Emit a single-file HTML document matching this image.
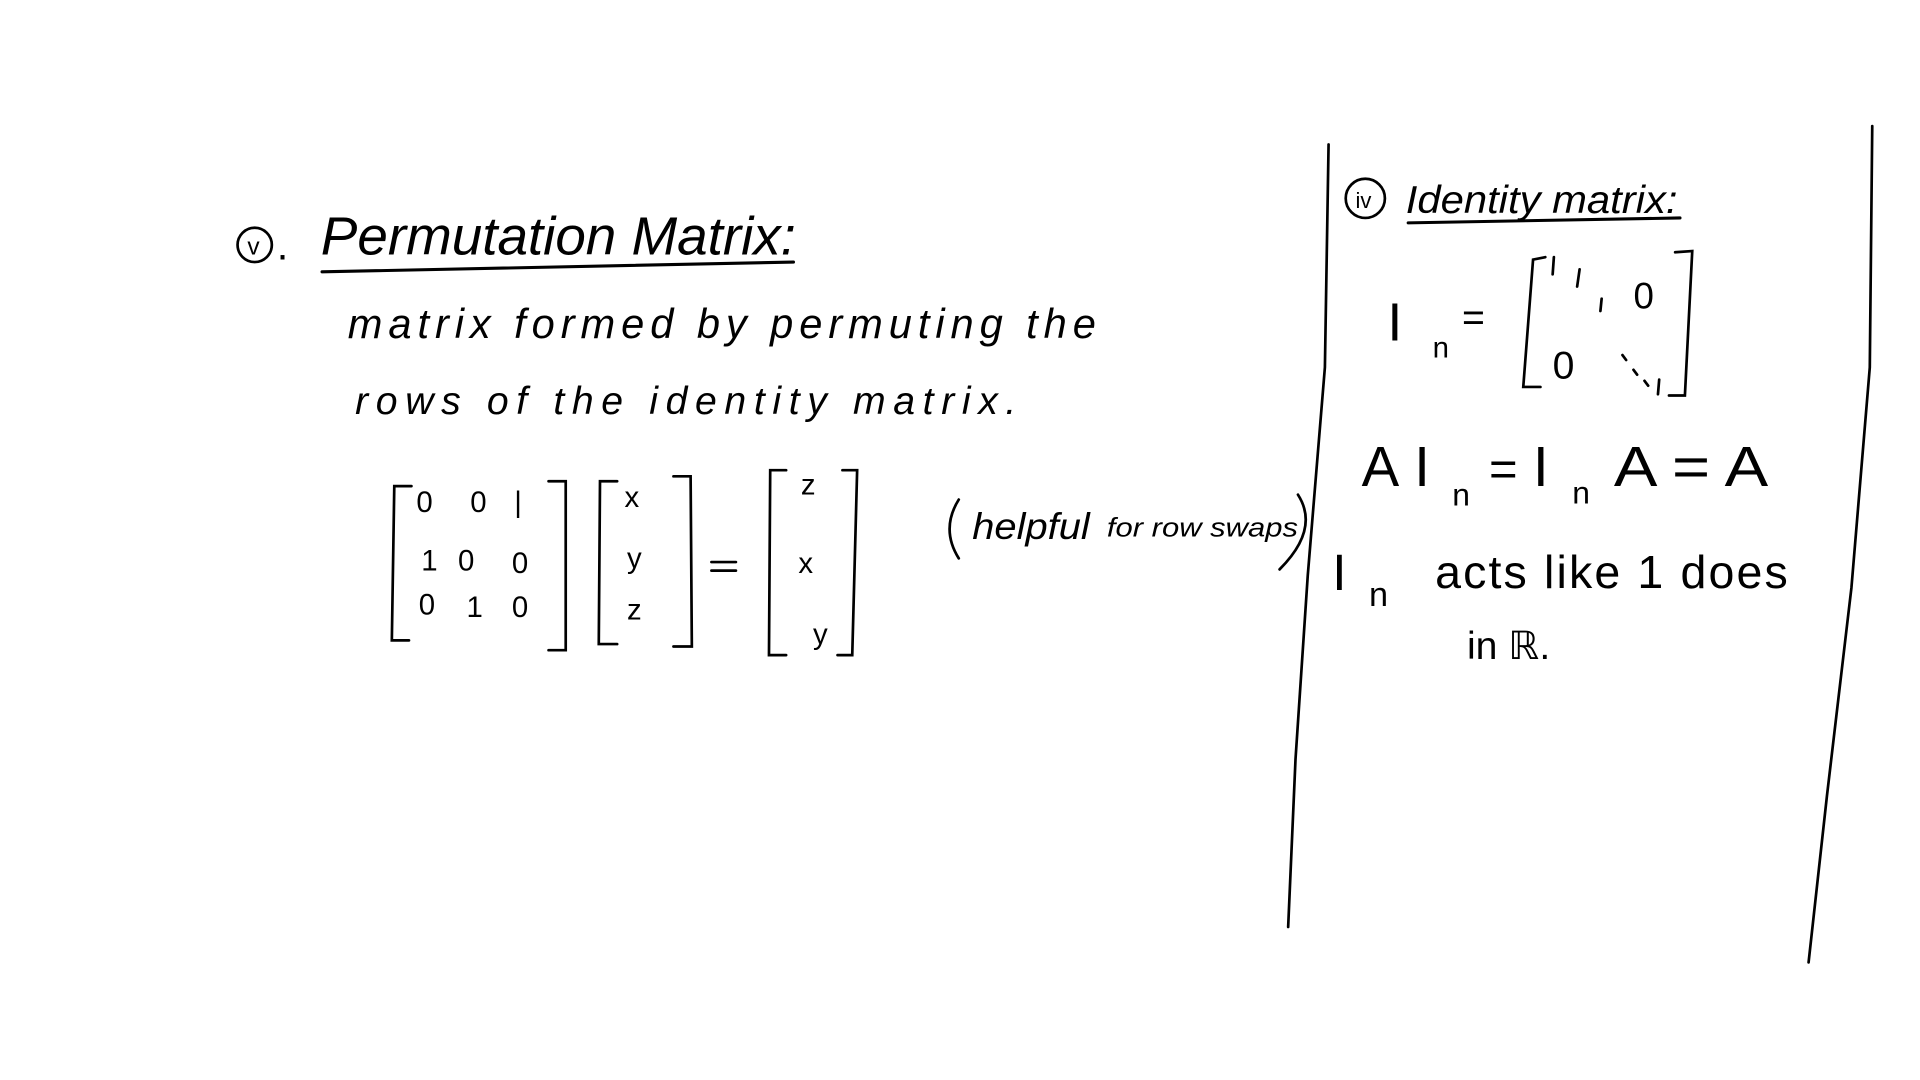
<!DOCTYPE html>
<html><head><meta charset="utf-8"><style>
html,body{margin:0;padding:0;background:#fff;width:1920px;height:1080px;overflow:hidden}
svg{display:block}
text{font-family:"Liberation Sans",sans-serif;fill:#000}
</style></head><body>
<svg width="1920" height="1080" viewBox="0 0 1568 882" preserveAspectRatio="none">
<g stroke="#000" fill="none" stroke-linecap="round" stroke-width="2.2">
<path d="M1085 118 L1082 300 L1068 470 L1058 620 L1052 757"/>
<path d="M1529 103 L1527 300 L1512 480 L1492 650 L1477 786"/>
<path d="M263 222 L648 214" stroke-width="2.5"/>
<path d="M1150 182 L1372 178" stroke-width="2.5"/>
<circle cx="208" cy="200" r="14"/>
<circle cx="1115" cy="162" r="16"/>
<path d="M336 397 L322 397 L320 523 L334 523"/>
<path d="M448 393 L462 393 L462 531 L448 531"/>
<path d="M504 393 L490 393 L489 526 L504 526"/>
<path d="M550 389 L564 389 L565 528 L550 528"/>
<path d="M642 384 L629 384 L628 535 L642 535"/>
<path d="M688 384 L700 384 L696 535 L684 535"/>
<path d="M581 459 L601 459 M581 466 L601 466"/>
<path d="M783 408 Q768 432 783 456"/>
<path d="M1060 404 Q1078 432 1045 465"/>
<path d="M1262 210 L1252 212 L1244 316 L1258 316"/>
<path d="M1368 206 L1382 205 L1376 323 L1363 323"/>
<path d="M1325 290 l3 4 M1334 302 l3 4 M1343 311 l3 4"/>
<path d="M1355 310 l-1 12"/>
<path d="M1269 210 l-1 14 M1290 220 l-2 14 M1308 244 l-1 10"/>
</g>
<g font-size="34">
<text x="1133" y="278" font-size="44">I</text>
<text x="1170" y="292" font-size="24">n</text>
<text x="1194" y="270" font-size="32">=</text>
<text x="1334" y="252" font-size="30">0</text>
<text x="1268" y="309" font-size="32">0</text>
<text x="1112" y="397" font-size="46">A</text>
<text x="1155" y="397" font-size="46">I</text>
<text x="1186" y="413" font-size="26">n</text>
<text x="1216" y="397" font-size="40">=</text>
<text x="1252" y="397" font-size="46">I</text>
<text x="1284" y="411" font-size="26">n</text>
<text x="1318" y="397" font-size="46" textLength="126" lengthAdjust="spacingAndGlyphs">A = A</text>
<text x="1088" y="482" font-size="42">I</text>
<text x="1118" y="495" font-size="28">n</text>
<text x="1172" y="480" font-size="38" textLength="288" lengthAdjust="spacing">acts like 1 does</text>
<text x="1198" y="538" font-size="32">in ℝ.</text>
<text x="1107" y="170" font-size="18">iv</text>
<text x="1148" y="174" font-size="32" font-style="italic" textLength="222" lengthAdjust="spacingAndGlyphs">Identity matrix:</text>
<text x="202" y="208" font-size="20">v</text>
<text x="226" y="212" font-size="34">.</text>
<text x="262" y="208" font-size="44" font-style="italic" textLength="388" lengthAdjust="spacingAndGlyphs">Permutation Matrix:</text>
<text x="284" y="276" font-size="34" font-style="italic" textLength="611" lengthAdjust="spacing">matrix formed by permuting the</text>
<text x="290" y="338" font-size="32" font-style="italic" textLength="540" lengthAdjust="spacing">rows of the identity matrix.</text>
<g font-size="24">
<text x="340" y="418">0</text><text x="384" y="418">0</text><text x="420" y="418">|</text>
<text x="344" y="466">1</text><text x="374" y="466">0</text><text x="418" y="468">0</text>
<text x="342" y="502">0</text><text x="381" y="504">1</text><text x="418" y="504">0</text>
<text x="510" y="414">x</text><text x="512" y="464">y</text><text x="512" y="506">z</text>
<text x="654" y="404">z</text><text x="652" y="468">x</text><text x="664" y="526">y</text>
</g>
<text x="794" y="440" font-size="30" font-style="italic" textLength="96" lengthAdjust="spacingAndGlyphs">helpful</text>
<text x="904" y="438" font-size="22" font-style="italic" textLength="156" lengthAdjust="spacingAndGlyphs">for row swaps</text>
</g>
</svg>
</body></html>
